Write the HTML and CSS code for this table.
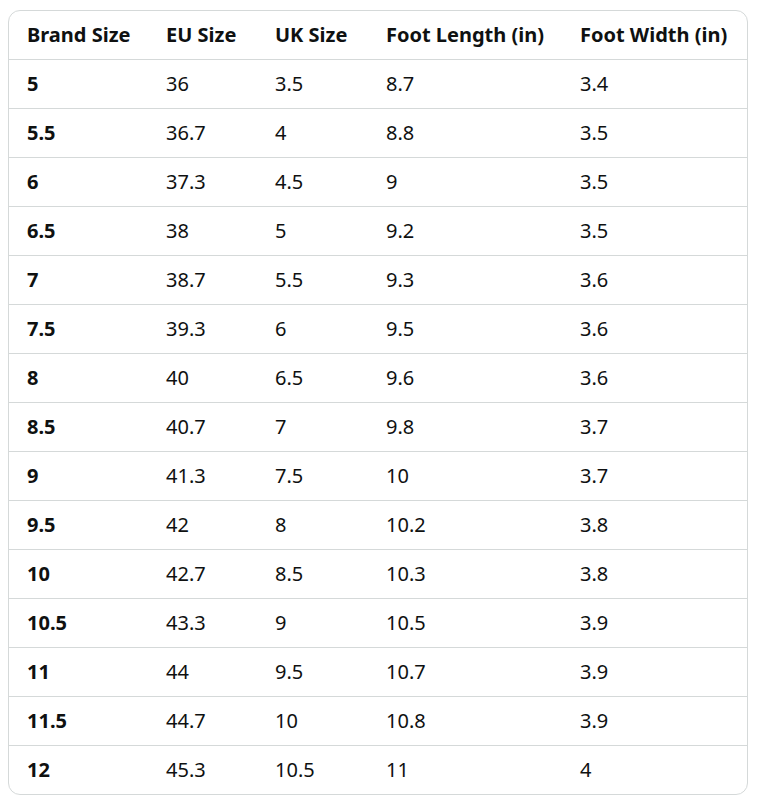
FILE: index.html
```html
<!DOCTYPE html>
<html lang="en">
<head>
<meta charset="utf-8">
<title>Size Chart</title>
<link rel="stylesheet" href="styles.css">
</head>
<body>
<div class="wrap">
<table class="chart">
<colgroup>
<col class="c1"><col class="c2"><col class="c3"><col class="c4"><col class="c5">
</colgroup>
<thead>
<tr><th>Brand Size</th><th>EU Size</th><th>UK Size</th><th>Foot Length (in)</th><th>Foot Width (in)</th></tr>
</thead>
<tbody>
<tr><th>5</th><td>36</td><td>3.5</td><td>8.7</td><td>3.4</td></tr>
<tr><th>5.5</th><td>36.7</td><td>4</td><td>8.8</td><td>3.5</td></tr>
<tr><th>6</th><td>37.3</td><td>4.5</td><td>9</td><td>3.5</td></tr>
<tr><th>6.5</th><td>38</td><td>5</td><td>9.2</td><td>3.5</td></tr>
<tr><th>7</th><td>38.7</td><td>5.5</td><td>9.3</td><td>3.6</td></tr>
<tr><th>7.5</th><td>39.3</td><td>6</td><td>9.5</td><td>3.6</td></tr>
<tr><th>8</th><td>40</td><td>6.5</td><td>9.6</td><td>3.6</td></tr>
<tr><th>8.5</th><td>40.7</td><td>7</td><td>9.8</td><td>3.7</td></tr>
<tr><th>9</th><td>41.3</td><td>7.5</td><td>10</td><td>3.7</td></tr>
<tr><th>9.5</th><td>42</td><td>8</td><td>10.2</td><td>3.8</td></tr>
<tr><th>10</th><td>42.7</td><td>8.5</td><td>10.3</td><td>3.8</td></tr>
<tr><th>10.5</th><td>43.3</td><td>9</td><td>10.5</td><td>3.9</td></tr>
<tr><th>11</th><td>44</td><td>9.5</td><td>10.7</td><td>3.9</td></tr>
<tr><th>11.5</th><td>44.7</td><td>10</td><td>10.8</td><td>3.9</td></tr>
<tr><th>12</th><td>45.3</td><td>10.5</td><td>11</td><td>4</td></tr>
</tbody>
</table>
</div>
</body>
</html>
```
FILE: styles.css
```css
html, body {
  margin: 0;
  background: #ffffff;
}
body {
  padding: 10px 0 0 8px;
  font-family: "Noto Sans", "Open Sans", sans-serif;
  color: #0f1111;
}
.wrap {
  box-sizing: border-box;
  width: 740px;
  border: 1px solid #d5d9d9;
  border-radius: 12px;
  overflow: hidden;
}
.chart {
  width: 100%;
  border-collapse: separate;
  border-spacing: 0;
  table-layout: fixed;
}
.c1 { width: 139px; }
.c2 { width: 109px; }
.c3 { width: 111px; }
.c4 { width: 194px; }
.chart th,
.chart td {
  box-sizing: border-box;
  height: 49px;
  padding: 0 0 0 18px;
  text-align: left;
  vertical-align: middle;
  font-size: 20px;
  line-height: 26px;
  border-bottom: 1px solid #d5d9d9;
  white-space: nowrap;
}
.chart th { font-weight: 700; }
.chart td { font-weight: 400; }
.chart tbody tr:last-child th,
.chart tbody tr:last-child td {
  border-bottom: none;
  height: 48px;
}
```
